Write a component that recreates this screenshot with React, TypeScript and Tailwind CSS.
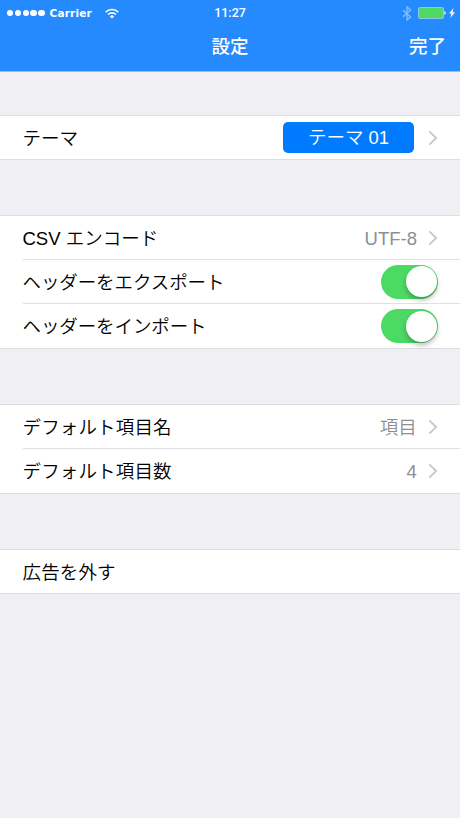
import { useState } from "react";
import type { ReactNode } from "react";
import clsx from "clsx";

function WifiIcon() {
  return (
    <svg width="14" height="11" viewBox="0 0 14 11" fill="none" stroke="white" strokeWidth="1.6">
      <path d="M0.7 4.1a8.9 8.9 0 0 1 12.6 0" />
      <path d="M3 6.5a5.7 5.7 0 0 1 8 0" />
      <path d="M7 10.6 4.8 8.4a3.1 3.1 0 0 1 4.4 0z" fill="white" stroke="none" />
    </svg>
  );
}

function BluetoothIcon() {
  return (
    <svg width="10" height="15" viewBox="0 0 10 15" fill="none" stroke="#86c0ff" strokeWidth="1.3">
      <path d="M1 4.2 8.6 10.9 5 14V1l3.6 3.1L1 10.8" />
    </svg>
  );
}

function BatteryIcon() {
  return (
    <svg width="28" height="12" viewBox="0 0 28 12">
      <rect x="0.5" y="0.5" width="25" height="11" rx="1.5" fill="#4cd964" stroke="#8fc6e8" />
      <path d="M26.4 4a2.2 2.2 0 0 1 0 4z" fill="white" />
    </svg>
  );
}

function BoltIcon() {
  return (
    <svg width="6" height="10" viewBox="0 0 6 10" fill="white">
      <path d="M4.6 0 0 5.6h2.5L1.3 10 6 4.2H3.5z" />
    </svg>
  );
}

function Chevron() {
  return (
    <svg
      className="ml-[11px] shrink-0"
      width="10"
      height="16"
      viewBox="0 0 10 16"
      fill="none"
      stroke="#c7c7cc"
      strokeWidth="1.8"
    >
      <path d="M1.3 1.3 8.2 8l-6.9 6.7" />
    </svg>
  );
}

function StatusBar() {
  return (
    <div className="grid h-6 grid-cols-[1fr_auto_1fr] items-center text-white">
      <div className="flex items-center pl-[7px]">
        <div className="flex gap-[1.4px]">
          {[0, 1, 2, 3, 4].map((i) => (
            <span key={i} className="size-[6.4px] rounded-full bg-white" />
          ))}
        </div>
        <span className="ml-[5px] w-[43px] font-['DejaVu_Sans'] text-[10.5px] leading-6 font-bold tracking-[0.2px] whitespace-nowrap">
          Carrier
        </span>
        <span className="ml-[12px]">
          <WifiIcon />
        </span>
      </div>
      <span className="font-[Roboto] text-[12.5px] font-medium">11:27</span>
      <div className="flex items-center justify-end pr-[5px]">
        <BluetoothIcon />
        <span className="ml-[6px]">
          <BatteryIcon />
        </span>
        <span className="ml-[3px]">
          <BoltIcon />
        </span>
      </div>
    </div>
  );
}

function NavBar() {
  return (
    <div className="grid h-[46px] grid-cols-3 items-center px-[14px] text-[18.5px] font-medium text-white">
      <span />
      <h1 className="text-center">設定</h1>
      <button className="text-right">完了</button>
    </div>
  );
}

function Switch({ label }: { label: string }) {
  const [on, setOn] = useState(true);

  return (
    <button
      role="switch"
      aria-label={label}
      aria-checked={on}
      onClick={() => setOn(!on)}
      className={clsx(
        "flex h-[34px] w-[57px] items-center rounded-full px-[1.5px]",
        on ? "justify-end bg-[#4cd964]" : "justify-start bg-[#e5e5ea]",
      )}
    >
      <span className="size-[31px] rounded-full bg-white shadow-[0_3px_5px_rgba(0,0,0,0.28)]" />
    </button>
  );
}

function Group({ className, children }: { className?: string; children: ReactNode }) {
  return <section className={clsx("border-y border-[#dddde1] bg-white", className)}>{children}</section>;
}

interface RowProps {
  label: string;
  className: string;
  divided?: boolean;
  children?: ReactNode;
}

function Row({ label, className, divided, children }: RowProps) {
  return (
    <div className="pl-[22.5px]">
      <div
        className={clsx(
          "flex items-center justify-between pr-[22px]",
          divided && "border-b border-[#e0e0e4]",
          className,
        )}
      >
        <span className="pt-[2px]">{label}</span>
        <div className="flex items-center">{children}</div>
      </div>
    </div>
  );
}

export default function App() {
  return (
    <div className="min-h-[818px] w-[460px] bg-[#efeff4] font-['Liberation_Sans','Noto_Sans_CJK_JP',sans-serif] text-[18.5px] leading-[26px] font-[350] text-black">
      <header className="h-[72px] border-b border-[#8bc0fa] bg-[#248afd]">
        <StatusBar />
        <NavBar />
      </header>

      <Group className="mt-[43px]">
        <Row label="テーマ" className="h-[43px]">
          <span className="flex h-[31px] w-[131px] items-center justify-center rounded-[5px] bg-[#007aff] pt-px text-white">
            テーマ 01
          </span>
          <span className="ml-[3px]">
            <Chevron />
          </span>
        </Row>
      </Group>

      <Group className="mt-[55px]">
        <Row label="CSV エンコード" className="h-[44px]" divided>
          <span className="pt-[2px] text-[#8e8e93]">UTF-8</span>
          <Chevron />
        </Row>
        <Row label="ヘッダーをエクスポート" className="h-[44px] tracking-[-0.1px]" divided>
          <Switch label="ヘッダーをエクスポート" />
        </Row>
        <Row label="ヘッダーをインポート" className="h-[44px] tracking-[-0.1px]">
          <Switch label="ヘッダーをインポート" />
        </Row>
      </Group>

      <Group className="mt-[55px]">
        <Row label="デフォルト項目名" className="h-[44px] tracking-[0.15px]" divided>
          <span className="pt-[2px] text-[#8e8e93]">項目</span>
          <Chevron />
        </Row>
        <Row label="デフォルト項目数" className="h-[44px] tracking-[0.15px]">
          <span className="pt-[2px] text-[#8e8e93]">4</span>
          <Chevron />
        </Row>
      </Group>

      <Group className="mt-[55px]">
        <Row label="広告を外す" className="h-[43px] tracking-[0.15px]" />
      </Group>
    </div>
  );
}
